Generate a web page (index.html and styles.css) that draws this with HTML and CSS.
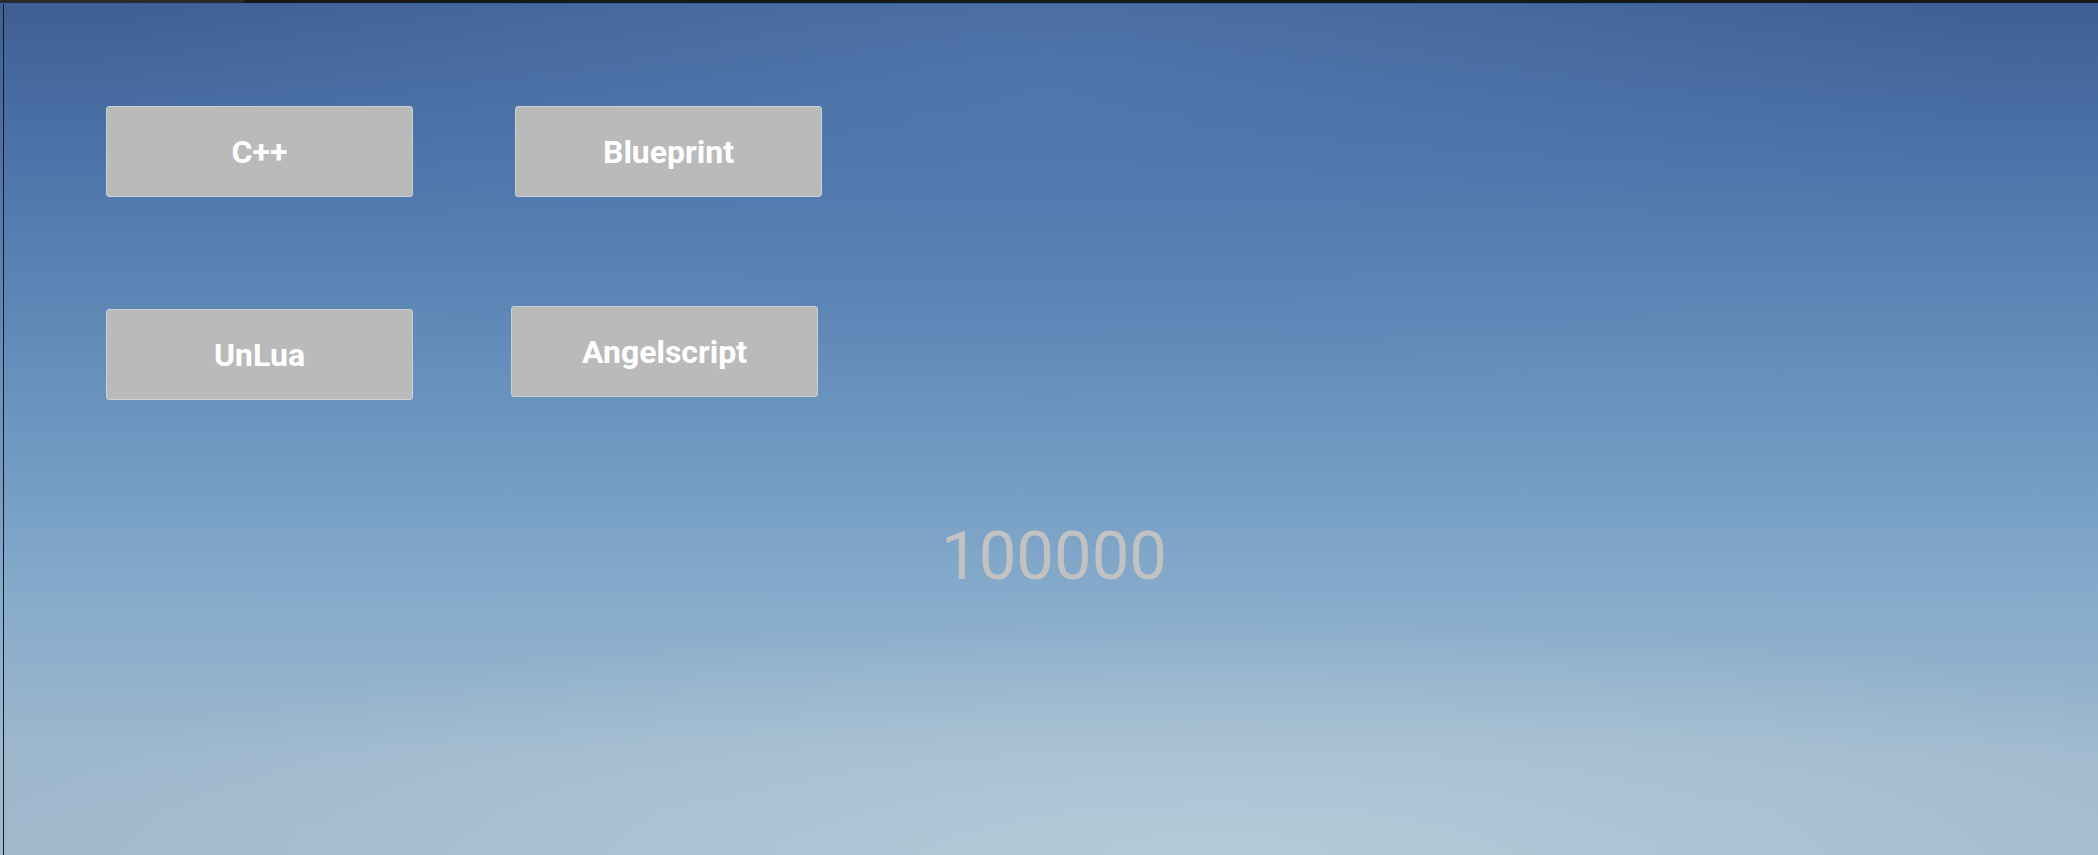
FILE: index.html
```html
<!DOCTYPE html>
<html>
<head>
<meta charset="utf-8">
<link rel="stylesheet" href="styles.css">
</head>
<body>
<div class="topbar"><div class="tab"></div></div>
<div class="accent"></div>
<div class="viewport">
  <div class="canvas">
    <div class="buttons">
      <div class="row">
        <div class="btn">C++</div>
        <div class="btn">Blueprint</div>
      </div>
      <div class="row row2">
        <div class="btn">UnLua</div>
        <div class="btn btn-shift">Angelscript</div>
      </div>
    </div>
    <div class="counter">100000</div>
  </div>
</div>
</body>
</html>
```

FILE: styles.css
```css
html, body {
  margin: 0;
  padding: 0;
  width: 2098px;
  height: 855px;
  overflow: hidden;
  background: #1a1a1a;
  font-family: Roboto, "Liberation Sans", sans-serif;
}
.topbar {
  height: 3px;
  background: #181818;
  display: flex;
}
.tab {
  width: 244px;
  background: #2a2a2a;
}
.accent {
  height: 1px;
  background: #2b62a8;
}
.viewport {
  height: 851px;
  padding-left: 3px;
  background:
    radial-gradient(ellipse 60% 28% at 58% 100%, rgba(190, 210, 222, 0.7), rgba(190, 210, 222, 0) 100%),
    radial-gradient(ellipse 45% 40% at 50% 8%, rgba(88, 128, 182, 0.55), rgba(88, 128, 182, 0) 100%),
    linear-gradient(to bottom, #405f92 0%, #4a70a6 15%, #6b95c0 48%, #86abcb 70%, #9db7cd 88%, #a0b8cc 100%);
}
.canvas {
  height: 100%;
  border-left: 1px solid #141820;
  padding: 102px 0 0 102px;
  box-sizing: border-box;
}
.buttons {
  display: flex;
  flex-direction: column;
  gap: 112px;
}
.row {
  display: flex;
  gap: 102px;
}
.btn {
  width: 305px;
  height: 89px;
  background: #bababa;
  border: 1px solid #c9d0d8;
  border-radius: 3px;
  color: #ffffff;
  font-weight: 700;
  font-size: 32px;
  display: flex;
  align-items: center;
  justify-content: center;
}
.btn-shift {
  margin-left: -4px;
  margin-top: -3px;
}
.counter {
  margin-top: 116px;
  padding-left: 10px;
  text-align: center;
  color: #c2c2c2;
  font-size: 67px;
  line-height: 80px;
  margin-right: 106px;
}
```
